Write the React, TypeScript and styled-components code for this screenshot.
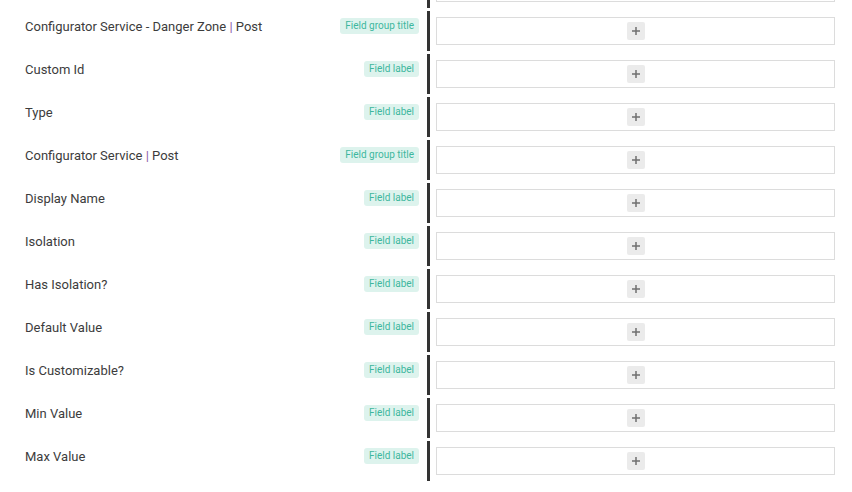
import React from 'react'
import styled, { createGlobalStyle } from 'styled-components'

const GlobalStyle = createGlobalStyle`
  html, body {
    margin: 0;
    padding: 0;
    background: #ffffff;
    overflow: hidden;
  }
  body {
    font-family: Roboto, "Liberation Sans", Arial, sans-serif;
  }
`

type Kind = 'group' | 'label'

interface Field {
  title: string
  kind: Kind
}

const fields: Field[] = [
  { title: 'Configurator Service - Danger Zone | Post', kind: 'group' },
  { title: 'Custom Id', kind: 'label' },
  { title: 'Type', kind: 'label' },
  { title: 'Configurator Service | Post', kind: 'group' },
  { title: 'Display Name', kind: 'label' },
  { title: 'Isolation', kind: 'label' },
  { title: 'Has Isolation?', kind: 'label' },
  { title: 'Default Value', kind: 'label' },
  { title: 'Is Customizable?', kind: 'label' },
  { title: 'Min Value', kind: 'label' },
  { title: 'Max Value', kind: 'label' },
]

const List = styled.div`
  display: flex;
  flex-direction: column;
  gap: 3px;
  margin-top: -32px;
`

const Row = styled.div`
  display: flex;
  height: 40px;
`

const Caption = styled.div`
  width: 427px;
  flex: none;
  display: flex;
  align-items: flex-start;
  justify-content: space-between;
  box-sizing: border-box;
  padding: 6px 8px 0 25px;
`

const Title = styled.span`
  font-size: 13px;
  line-height: 20px;
  color: #3c3c3c;
`

const Pipe = styled.span`
  color: #8a5aa8;
`

const Badge = styled.span`
  margin-top: 1px;
  height: 16px;
  line-height: 16px;
  padding: 0 5px;
  border-radius: 3px;
  background: #ddf3ed;
  color: #3db79e;
  font-size: 10px;
  white-space: nowrap;
`

const Slot = styled.div`
  flex: 1;
  border-left: 3px solid #333333;
  padding: 6px 17px 6px 6px;
`

const DropBox = styled.div`
  height: 28px;
  box-sizing: border-box;
  border: 1px solid #dcdcdc;
  display: flex;
  align-items: center;
  justify-content: center;
`

const AddButton = styled.button`
  width: 18px;
  height: 18px;
  padding: 0;
  border: none;
  border-radius: 2px;
  background: #ebebeb;
  display: flex;
  align-items: center;
  justify-content: center;
  cursor: pointer;
`

const Plus = () => (
  <svg width="10" height="10" viewBox="0 0 10 10">
    <path d="M5 1v8M1 5h8" stroke="#707070" strokeWidth="1.5" />
  </svg>
)

const renderTitle = (title: string) => {
  const parts = title.split('|')
  if (parts.length < 2) return title
  return (
    <>
      {parts[0]}
      <Pipe>|</Pipe>
      {parts[1]}
    </>
  )
}

export default function App() {
  return (
    <>
      <GlobalStyle />
      <List>
        <Row>
          <Caption />
          <Slot>
            <DropBox>
              <AddButton>
                <Plus />
              </AddButton>
            </DropBox>
          </Slot>
        </Row>
        {fields.map((f) => (
          <Row key={f.title}>
            <Caption>
              <Title>{renderTitle(f.title)}</Title>
              <Badge>{f.kind === 'group' ? 'Field group title' : 'Field label'}</Badge>
            </Caption>
            <Slot>
              <DropBox>
                <AddButton>
                  <Plus />
                </AddButton>
              </DropBox>
            </Slot>
          </Row>
        ))}
      </List>
    </>
  )
}
